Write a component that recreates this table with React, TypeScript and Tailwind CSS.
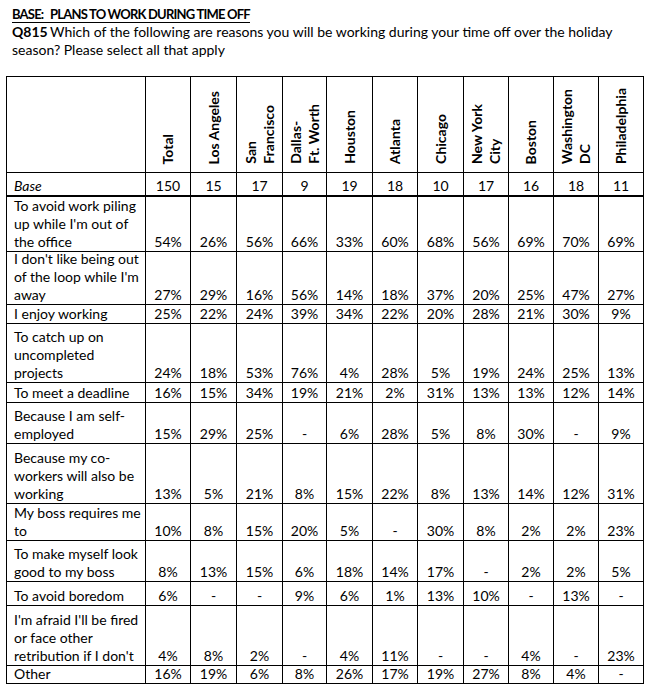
const cols = [
  { w: "w-[45px]", label: ["Total"] },
  { w: "w-[46px]", label: ["Los Angeles"] },
  { w: "w-[46px]", label: ["San", "Francisco"] },
  { w: "w-[44px]", label: ["Dallas-", "Ft. Worth"] },
  { w: "w-[46px]", label: ["Houston"] },
  { w: "w-[45px]", label: ["Atlanta"] },
  { w: "w-[46px]", label: ["Chicago"] },
  { w: "w-[45px]", label: ["New York", "City"] },
  { w: "w-[45px]", label: ["Boston"] },
  { w: "w-[45px]", label: ["Washington", "DC"] },
  { w: "w-[45px]", label: ["Philadelphia"] },
];

const base = ["150", "15", "17", "9", "19", "18", "10", "17", "16", "18", "11"];

const rows: { h: string; label: string[]; values: string[] }[] = [
  {
    h: "h-[55px]",
    label: ["To avoid work piling", "up while I'm out of", "the office"],
    values: ["54%", "26%", "56%", "66%", "33%", "60%", "68%", "56%", "69%", "70%", "69%"],
  },
  {
    h: "h-[53px]",
    label: ["I don't like being out", "of the loop while I'm", "away"],
    values: ["27%", "29%", "16%", "56%", "14%", "18%", "37%", "20%", "25%", "47%", "27%"],
  },
  {
    h: "h-[19px]",
    label: ["I enjoy working"],
    values: ["25%", "22%", "24%", "39%", "34%", "22%", "20%", "28%", "21%", "30%", "9%"],
  },
  {
    h: "h-[59px]",
    label: ["To catch up on", "uncompleted", "projects"],
    values: ["24%", "18%", "53%", "76%", "4%", "28%", "5%", "19%", "24%", "25%", "13%"],
  },
  {
    h: "h-[20px]",
    label: ["To meet a deadline"],
    values: ["16%", "15%", "34%", "19%", "21%", "2%", "31%", "13%", "13%", "12%", "14%"],
  },
  {
    h: "h-[41px]",
    label: ["Because I am self-", "employed"],
    values: ["15%", "29%", "25%", "-", "6%", "28%", "5%", "8%", "30%", "-", "9%"],
  },
  {
    h: "h-[60px]",
    label: ["Because my co-", "workers will also be", "working"],
    values: ["13%", "5%", "21%", "8%", "15%", "22%", "8%", "13%", "14%", "12%", "31%"],
  },
  {
    h: "h-[37px]",
    label: ["My boss requires me", "to"],
    values: ["10%", "8%", "15%", "20%", "5%", "-", "30%", "8%", "2%", "2%", "23%"],
  },
  {
    h: "h-[41px]",
    label: ["To make myself look", "good to my boss"],
    values: ["8%", "13%", "15%", "6%", "18%", "14%", "17%", "-", "2%", "2%", "5%"],
  },
  {
    h: "h-[24px]",
    label: ["To avoid boredom"],
    values: ["6%", "-", "-", "9%", "6%", "1%", "13%", "10%", "-", "13%", "-"],
  },
  {
    h: "h-[60px]",
    label: ["I'm afraid I'll be fired", "or face other", "retribution if I don't"],
    values: ["4%", "8%", "2%", "-", "4%", "11%", "-", "-", "4%", "-", "23%"],
  },
  {
    h: "h-[18px]",
    label: ["Other"],
    values: ["16%", "19%", "6%", "8%", "26%", "17%", "19%", "27%", "8%", "4%", "-"],
  },
];

function Lines({ lines }: { lines: string[] }) {
  return (
    <>
      {lines.map((l, i) => (
        <span key={i} className="block whitespace-nowrap">
          {l}
        </span>
      ))}
    </>
  );
}

export default function App() {
  return (
    <div className="h-[698px] w-[651px] bg-white font-['Lato',sans-serif] text-[14px] leading-[18px] text-black">
      <div className="px-[12px] pt-[5px]">
        <div className="h-[18px]">
          <div className="inline-flex border-b border-black text-[13px] leading-[16px] font-bold tracking-[-0.8px]">
            <span className="w-[38px]">BASE:</span>
            <span>PLANS TO WORK DURING TIME OFF</span>
          </div>
        </div>
        <div>
          <span className="inline-block w-[38px] font-bold">Q815</span>
          Which of the following are reasons you will be working during your time off over the holiday
          <br />
          season? Please select all that apply
        </div>
      </div>

      <div className="ml-[6px] mt-[17px] w-[638px] border-l border-t border-black">
        {/* header */}
        <div className="flex h-[96px]">
          <div className="w-[139px] border-b border-r border-black" />
          {cols.map((c, i) => (
            <div
              key={i}
              className={`${c.w} flex items-end justify-center border-b border-r border-black pb-[8px] font-bold`}
            >
              <div className="rotate-180 text-left [writing-mode:vertical-rl]">
                <Lines lines={c.label} />
              </div>
            </div>
          ))}
        </div>

        {/* base */}
        <div className="flex h-[24px]">
          <div className="flex w-[139px] items-end border-b-2 border-r border-black pl-[7px] italic">
            Base
          </div>
          {cols.map((c, i) => (
            <div
              key={i}
              className={`${c.w} flex items-end justify-center border-b-2 border-r border-black`}
            >
              {base[i]}
            </div>
          ))}
        </div>

        {rows.map((r, ri) => (
          <div key={ri} className={`flex ${r.h}`}>
            <div className="flex w-[139px] flex-col justify-end border-b border-r border-black pl-[7px]">
              <Lines lines={r.label} />
            </div>
            {cols.map((c, i) => (
              <div
                key={i}
                className={`${c.w} flex items-end justify-center border-b border-r border-black`}
              >
                {r.values[i]}
              </div>
            ))}
          </div>
        ))}
      </div>
    </div>
  );
}
